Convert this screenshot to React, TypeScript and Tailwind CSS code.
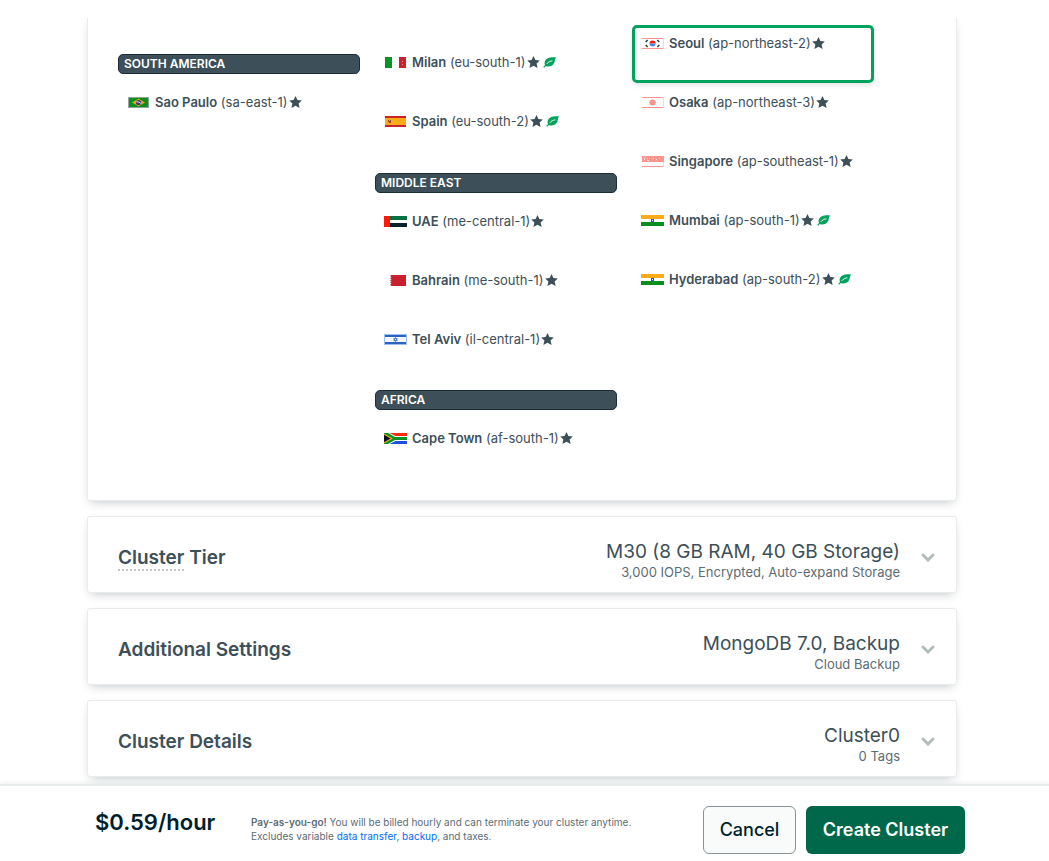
import type { ReactNode } from "react";

type FlagCode = "br" | "it" | "es" | "ae" | "bh" | "il" | "za" | "kr" | "jp" | "sg" | "in";

const paleFrame = (
  <>
    <rect x="1" width="21" height="11" fill="#fff" />
    <path d="M1 .5H22M1 10.5H22" stroke="#ff938d" />
    <path d="M22.5 0V11" stroke="#ffdcae" />
  </>
);

const flagArt: Record<FlagCode, ReactNode> = {
  br: (
    <>
      <rect x="1" width="21" height="11" fill="#8fa89a" />
      <rect x="2" y="1" width="19" height="9" fill="#0a8f1e" />
      <path d="M5 5.5 11.5 1.8 18 5.5 11.5 9.2Z" fill="#f9a01b" />
      <circle cx="11.5" cy="5.5" r="2.6" fill="#2f3f7a" />
      <path d="M9.3 4.8Q11.8 4.4 13.8 6.3" stroke="#fff" strokeWidth="0.9" fill="none" />
    </>
  ),
  it: (
    <>
      <rect x="1" width="7" height="11" fill="#0a9325" />
      <rect x="15" width="7" height="11" fill="#cc1f30" />
      <rect x="18" y="4" width="1" height="1" fill="#e78b92" />
      <rect x="18" y="7" width="1" height="1" fill="#e78b92" />
    </>
  ),
  es: (
    <>
      <rect x="1" width="21" height="11" fill="#c8232c" />
      <rect x="1" y="2" width="21" height="7" fill="#fbab18" />
      <rect x="4" y="4" width="1" height="2" fill="#a0442c" />
      <rect x="5" y="5" width="2" height="2" fill="#a0442c" />
      <rect x="6" y="4" width="1" height="1" fill="#7a4a7a" />
    </>
  ),
  ae: (
    <>
      <rect x="6" width="17" height="4" fill="#067242" />
      <rect x="6" y="7" width="17" height="4" fill="#03202c" />
      <rect x="6" y="4" width="17" height="3" fill="#fff" />
      <rect width="6" height="11" fill="#ff1a0a" />
    </>
  ),
  bh: (
    <path d="M7.5 0H22V11H7.5L6 9.9 7.5 8.8 6 7.7 7.5 6.6 6 5.5 7.5 4.4 6 3.3 7.5 2.2 6 1.1Z" fill="#c8202f" />
  ),
  il: (
    <>
      <rect width="23" height="11" fill="#f4f8fd" />
      <rect width="23" height="1" fill="#9cc0ef" />
      <rect y="1" width="23" height="2" fill="#2a63c0" />
      <rect y="8" width="23" height="2" fill="#2a63c0" />
      <rect y="10" width="23" height="1" fill="#9cc0ef" />
      <rect width="1" height="11" fill="#9cc0ef" />
      <rect x="22" width="1" height="11" fill="#9cc0ef" />
      <path d="M11.5 3.5 13.3 6.6H9.7ZM11.5 7.6 9.7 4.5H13.3Z" fill="none" stroke="#3a72d0" strokeWidth="0.8" />
    </>
  ),
  za: (
    <>
      <rect width="23" height="5" fill="#ff2a12" />
      <rect y="6" width="23" height="5" fill="#1d4fe0" />
      <path d="M0 0H5.5L11.5 3H23V8H11.5L5.5 11H0Z" fill="#fff" />
      <path d="M0 0H4L11 4H23V7H11L4 11H0Z" fill="#0a9325" />
      <path d="M0 .4 8.8 5.5 0 10.6Z" fill="#fbab18" />
      <path d="M0 1.8 6.6 5.5 0 9.2Z" fill="#03131c" />
    </>
  ),
  kr: (
    <>
      {paleFrame}
      <path d="M8.5 5.5a3 3 0 0 1 6 0Z" fill="#f5200d" />
      <path d="M8.500 5.500a3 3 0 0 0 6 0Z" fill="#4b86e8" />
      <path d="M6.700 2 4.700 4M6.700 9 4.700 7M16.300 2 18.300 4M16.300 9 18.300 7" stroke="#2b3a44" strokeWidth="1.500" />
    </>
  ),
  jp: (
    <>
      {paleFrame}
      <circle cx="11.5" cy="5.5" r="3" fill="#ff8e88" />
      <path d="M8 5.500H15" stroke="#f3a184" />
    </>
  ),
  sg: (
    <>
      {paleFrame}
      <rect x="1" width="22" height="6" fill="#ff938d" />
      <path d="M4 1.500Q2.500 3 4 4.500M6 2.500H7M8 2.500H9M6 4.500H8M12 2.500H13M15 3.500H16M18 2.500H19" stroke="#ffe0dd" fill="none" />
    </>
  ),
  in: (
    <>
      <rect width="23" height="4" fill="#fbab18" />
      <rect y="4" width="23" height="3" fill="#fff" />
      <rect y="7" width="23" height="4" fill="#0a8f1e" />
      <rect x="10" y="4" width="3" height="3" fill="#2453e6" />
      <rect x="11" y="5" width="1" height="1" fill="#fff" />
    </>
  ),
};

function Flag({ code }: { code: FlagCode }) {
  return (
    <svg viewBox="0 0 23 11" className="h-[11px] w-[23px] shrink-0" aria-hidden="true">
      {flagArt[code]}
    </svg>
  );
}

function Star() {
  return (
    <svg viewBox="0 0 13 12" className="h-3 w-[13px] shrink-0" aria-hidden="true">
      <path d="M6.5 0 8.4 4 12.8 4.500 9.600 7.500 10.600 12 6.500 9.700 2.400 12 3.400 7.500 .200 4.500 4.600 4Z" fill="#3d4f58" />
    </svg>
  );
}

function Leaf() {
  return (
    <svg viewBox="0 0 13 11" className="h-[11px] w-[13px] shrink-0" aria-hidden="true">
      <path d="M13 .2C8.500 .200 5 .300 3 2.400 1.300 4.200 1.300 6.400 2 7.900L.200 9.900 1.100 10.700 2.800 8.900C5 9.900 8.400 9.600 10.400 7.200 12.100 5.200 11.500 2.500 13 .200Z" fill="#00a35c" />
      <path d="M4 6.600C5.200 4.900 7 4.200 9 3.900" stroke="#fff" strokeWidth=".9" strokeLinecap="round" fill="none" />
    </svg>
  );
}

type RegionProps = { flag: FlagCode; name: string; zone: string; green?: boolean; selected?: boolean };

function Region({ flag, name, zone, green, selected }: RegionProps) {
  return (
    <button
      type="button"
      aria-pressed={!!selected}
      className={
        "mb-px flex h-[58px] w-full items-start rounded-[5px] border-[3px] px-1.5 pt-1.5 text-left text-[13px] leading-[18px] text-[#3d4f58] " +
        (selected ? "border-[#00a35c] shadow-[0_3px_4px_rgba(0,30,43,0.1)]" : "border-transparent")
      }
    >
      <span className="flex items-center whitespace-nowrap">
        <Flag code={flag} />
        <span className="ml-[5px]">
          <strong className="font-semibold">{name}</strong> ({zone})
        </span>
        <span className="ml-px flex items-center gap-[3px]">
          <Star />
          {green && <Leaf />}
        </span>
      </span>
    </button>
  );
}

function GroupHeading({ children }: { children: ReactNode }) {
  return (
    <h3 className="mb-2.5 flex h-5 items-center rounded-[5px] border border-[#1c2d38] bg-[#3d4f58] px-[5px] text-xs font-semibold text-white">
      {children}
    </h3>
  );
}

type SectionProps = { title: ReactNode; value: string; detail: string };

function Section({ title, value, detail }: SectionProps) {
  return (
    <section className="rounded-[3px] border border-[#e8edeb] bg-white shadow-[0_4px_10px_-4px_rgba(0,30,43,0.3)]">
      <button type="button" className="flex h-[75px] w-full items-center pt-1.5 pr-[21px] pl-[30px] text-left">
        <h2 className="text-[19px] leading-6 font-semibold text-[#3d4f58]">{title}</h2>
        <span className="ml-auto pt-1 text-right">
          <span className="block text-[19px] leading-6 text-[#3d4f58]">{value}</span>
          <span className="block text-[13px] leading-4 text-[#5c6c75]">{detail}</span>
        </span>
        <svg viewBox="0 0 14 9" className="ml-[21px] h-[9px] w-3.5" aria-hidden="true">
          <path d="M2 2 7 7 12 2" fill="none" stroke="#b2bdbe" strokeWidth="3" strokeLinecap="round" strokeLinejoin="miter" />
        </svg>
      </button>
    </section>
  );
}

export default function App() {
  return (
    <div className="flex min-h-screen flex-col bg-white pt-[18px] font-['Inter',sans-serif]">
      <main className="flex flex-1 flex-col gap-[15px] overflow-hidden pr-[92px] pb-[7px] pl-[87px]">
        <section className="rounded-b-[3px] border border-t-0 border-[#e8edeb] bg-white pt-[7px] pr-[82px] pb-[21px] pl-[30px] shadow-[0_4px_10px_-4px_rgba(0,30,43,0.3)]">
          <div className="grid grid-cols-3 gap-[15px]">
            <div className="pt-[29px]">
              <GroupHeading>SOUTH AMERICA</GroupHeading>
              <Region flag="br" name="Sao Paulo" zone="sa-east-1" />
            </div>
            <div className="pt-[19px]">
              <Region flag="it" name="Milan" zone="eu-south-1" green />
              <Region flag="es" name="Spain" zone="eu-south-2" green />
              <div className="pt-[11px]">
                <GroupHeading>MIDDLE EAST</GroupHeading>
                <Region flag="ae" name="UAE" zone="me-central-1" />
                <Region flag="bh" name="Bahrain" zone="me-south-1" />
                <Region flag="il" name="Tel Aviv" zone="il-central-1" />
              </div>
              <div className="pt-2.5">
                <GroupHeading>AFRICA</GroupHeading>
                <Region flag="za" name="Cape Town" zone="af-south-1" />
              </div>
            </div>
            <div>
              <Region flag="kr" name="Seoul" zone="ap-northeast-2" selected />
              <Region flag="jp" name="Osaka" zone="ap-northeast-3" />
              <Region flag="sg" name="Singapore" zone="ap-southeast-1" />
              <Region flag="in" name="Mumbai" zone="ap-south-1" green />
              <Region flag="in" name="Hyderabad" zone="ap-south-2" green />
            </div>
          </div>
        </section>
        <Section
          title={
            <>
              <span className="border-b-2 border-dotted border-[#c1c7c6]">Cluster</span> Tier
            </>
          }
          value="M30 (8 GB RAM, 40 GB Storage)"
          detail="3,000 IOPS, Encrypted, Auto-expand Storage"
        />
        <Section title="Additional Settings" value="MongoDB 7.0, Backup" detail="Cloud Backup" />
        <Section title="Cluster Details" value="Cluster0" detail="0 Tags" />
      </main>
      <footer className="sticky bottom-0 flex h-[77px] items-center border-t-2 border-[#e8edeb] bg-white pt-3 pr-[84px] pl-[95px] shadow-[0_-1px_4px_rgba(0,30,43,0.08)]">
        <p className="w-[156px] pb-4 text-[22px] leading-8 font-semibold text-[#001e2b]">$0.59/hour</p>
        <p className="pb-0.5 text-[10px] leading-[14px] text-[#5c6c75]">
          <strong className="font-semibold">Pay-as-you-go!</strong> You will be billed hourly and can terminate your cluster anytime.
          <br />
          Excludes variable{" "}
          <a href="#data-transfer" className="text-[#016bf8]">data transfer</a>,{" "}
          <a href="#backup" className="text-[#016bf8]">backup</a>, and taxes.
        </p>
        <div className="ml-auto flex gap-2.5">
          <button type="button" className="h-12 w-[93px] rounded-md border border-[#889397] bg-[#f9fbfa] text-lg font-medium text-[#001e2b]">
            Cancel
          </button>
          <button type="button" className="h-12 w-[159px] rounded-md bg-[#00684a] text-lg font-semibold whitespace-nowrap text-white">
            Create Cluster
          </button>
        </div>
      </footer>
    </div>
  );
}
